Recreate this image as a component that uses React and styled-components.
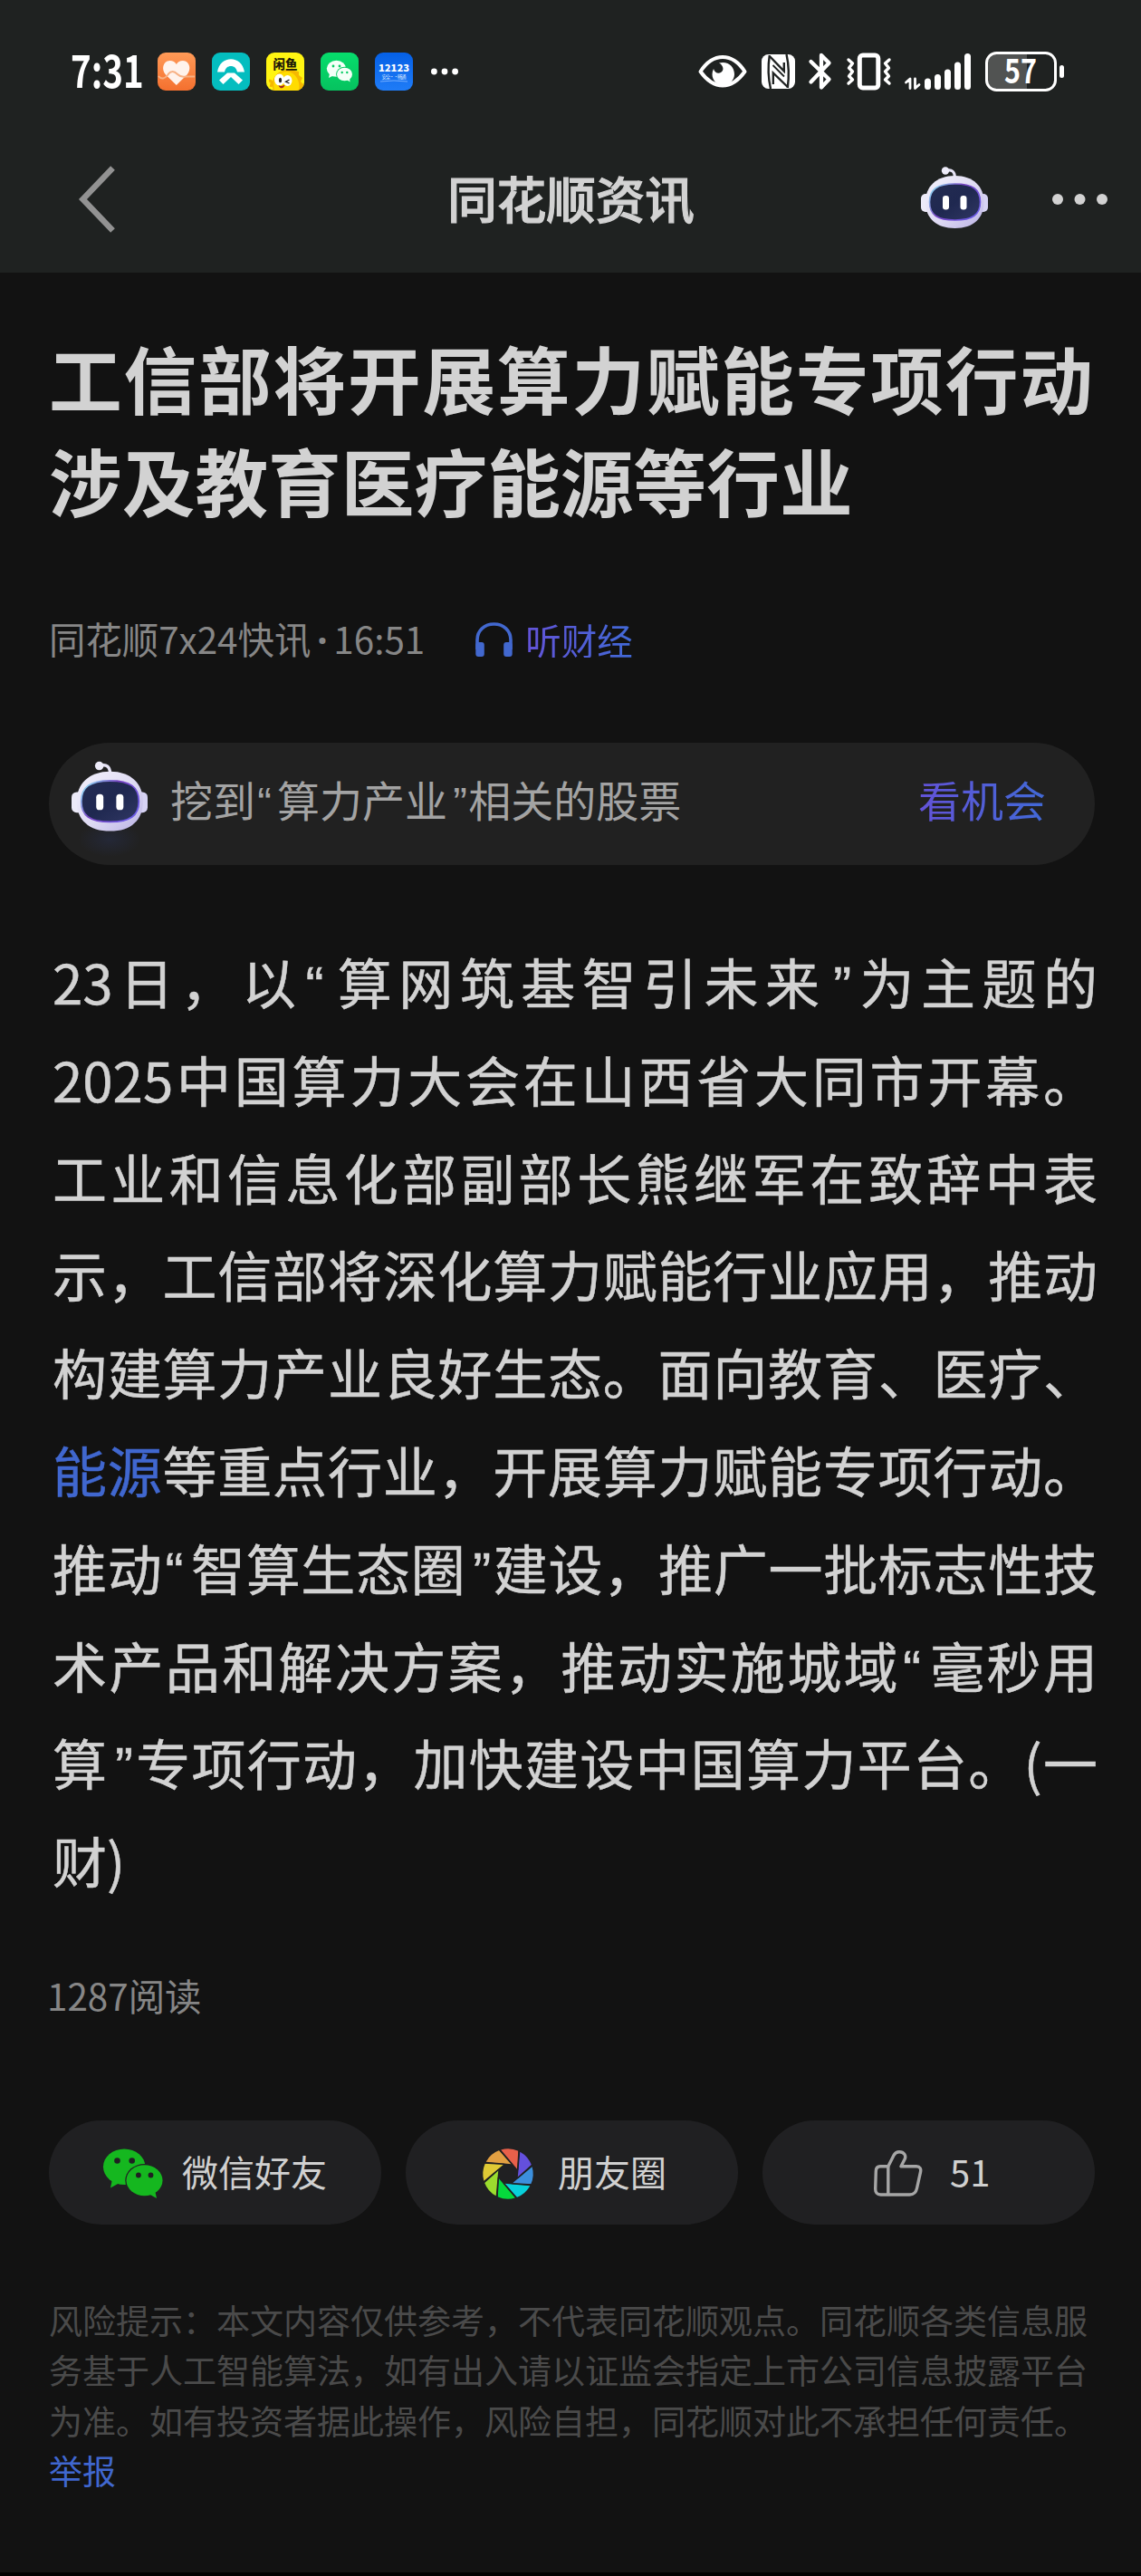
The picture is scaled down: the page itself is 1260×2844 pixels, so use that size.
import React from 'react';
import styled, { createGlobalStyle } from 'styled-components';

const GlobalStyle = createGlobalStyle`
  * {
    box-sizing: border-box;
  }

  body {
    margin: 0;
    background: #121212;
    font-family: 'Noto Sans CJK SC', sans-serif;
    text-spacing-trim: space-all;
  }

  svg {
    display: block;
    flex: none;
    overflow: visible;
  }
`;

const Page = styled.div`
  width: 1260px;
  height: 2844px;
  display: flex;
  flex-direction: column;
  background: #121212;
  border-bottom: 4px solid #000;
  overflow: hidden;
`;

const StatusBar = styled.div`
  height: 158px;
  padding: 0 84px 0 78px;
  display: flex;
  justify-content: space-between;
  align-items: center;
  background: #1f2221;
`;

const StatusGroup = styled.div`
  display: flex;
  align-items: center;
  gap: ${props => props.gap}px;
`;

const Clock = styled.div`
  width: 78px;
  padding-bottom: 8px;
  font-size: 50px;
  line-height: 50px;
  font-weight: 700;
  color: #fff;
  white-space: nowrap;
  transform: scaleX(0.77);
  transform-origin: left center;
`;

const More = styled.div`
  margin-left: 2px;
`;

const NavBar = styled.header`
  height: 143px;
  padding: 0 37px 0 87px;
  display: grid;
  grid-template-columns: 206px 1fr 206px;
  align-items: center;
  background: #1f2221;
`;

const NavTitle = styled.div`
  text-align: center;
  font-size: 54.5px;
  line-height: 60px;
  font-weight: 500;
  color: #d2d2d2;
  -webkit-text-stroke: 1.2px #d2d2d2;
  margin-left: -49px;
  padding-bottom: 23px;
`;

const NavLeft = styled.div`
  padding-bottom: 20px;
`;

const NavActions = styled.div`
  display: flex;
  align-items: center;
  justify-content: flex-end;
  gap: 71px;
  padding-bottom: 24px;
`;

const NavMore = styled.div`
  padding-top: 4px;
`;

const Article = styled.main`
  padding: 59px 51px 0 54px;
`;

const Title = styled.h1`
  margin: 0;
  width: 1153px;
  font-size: 80.7px;
  line-height: 112.5px;
  font-weight: 700;
  color: #d2d2d2;
`;

const TitleLine = styled.div`
  white-space: nowrap;
  text-align-last: ${props => (props.$fill ? 'justify' : 'left')};
`;

const Meta = styled.div`
  margin-top: 101px;
  height: 40px;
  display: flex;
  align-items: center;
  font-size: 40.4px;
  line-height: 40px;
  color: #868686;
`;

const MetaDot = styled.span`
  display: inline-block;
  width: 25px;
  text-align: center;
  font-family: 'Noto Sans', sans-serif;
  font-weight: 700;
`;

const Listen = styled.a`
  display: flex;
  align-items: center;
  gap: 14px;
  margin-left: 56px;
  font-size: 39.5px;
`;

const GradientText = styled.span`
  background: linear-gradient(90deg, #6353d8, #4169d6);
  background-clip: text;
  color: transparent;
`;

const StockBar = styled.div`
  margin-top: 94px;
  height: 135px;
  padding: 0 54px 0 25px;
  display: flex;
  align-items: center;
  border-radius: 68px;
  background: #212121;
  font-size: 47px;
  line-height: 60px;
  color: #a3a3a3;
`;

const StockText = styled.span`
  flex: 1;
  margin-left: 25px;
  padding-bottom: 12px;
`;

const StockLink = styled(GradientText)`
  padding-bottom: 12px;
`;

const Mascot = styled.div`
  padding-bottom: 17px;
`;

const Body = styled.section`
  margin: 74px 0 0 4px;
  width: 1154px;
  font-size: 60px;
  line-height: 107.8px;
  color: #d2d2d2;
  -webkit-text-stroke: 0.5px;
`;

const BodyLine = styled.div`
  height: 107.8px;
  white-space: nowrap;
  text-align-last: ${props => (props.$last ? 'left' : 'justify')};
`;

const Quote = styled.span`
  font-family: 'Liberation Sans', sans-serif;
  line-height: 0;
  margin-left: ${props => (props.$close ? '0.13em' : '0.05em')};
  margin-right: ${props => (props.$close ? '0.03em' : '0.13em')};
`;

const Keyword = styled.a`
  color: #4067cf;
`;

const Reads = styled.div`
  margin: 76px 0 0 -2px;
  font-size: 40.4px;
  line-height: 40px;
  color: #868686;
`;

const ShareRow = styled.div`
  margin-top: 118px;
  display: grid;
  grid-template-columns: repeat(3, 1fr);
  gap: 27px;
`;

const ShareButton = styled.div`
  height: 115px;
  padding: 3px 0 0 ${props => props.$inset}px;
  display: flex;
  align-items: center;
  gap: ${props => props.$gap}px;
  border-radius: 58px;
  background: #202022;
  font-size: 40px;
  line-height: 44px;
  color: #d0d0d0;
`;

const ShareLabel = styled.span`
  padding-bottom: 6px;
`;

const Notice = styled.p`
  margin: 78px 0 0;
  font-size: 37px;
  line-height: 55.4px;
  color: #4a4a4a;
  white-space: nowrap;
`;

const Report = styled.a`
  color: #4067cf;
`;

const Robot = ({ id, width, height, glow }) => (
  <svg width={width} height={height} viewBox="0 0 74 68">
    <defs>
      <linearGradient id={`${id}-shell`} x1="0" y1="0" x2="1" y2="1">
        <stop offset="0" stopColor="#f4f2fc" />
        <stop offset="0.55" stopColor="#dedaf3" />
        <stop offset="1" stopColor="#b9b1e4" />
      </linearGradient>
      <linearGradient id={`${id}-rim`} x1="0" y1="0.2" x2="1" y2="0.8">
        <stop offset="0" stopColor="#8fd8f4" />
        <stop offset="0.4" stopColor="#7a45c4" />
        <stop offset="1" stopColor="#6a5ce8" />
      </linearGradient>
      <linearGradient id={`${id}-face`} x1="0" y1="0" x2="1" y2="1">
        <stop offset="0" stopColor="#242c52" />
        <stop offset="0.5" stopColor="#1f2850" />
        <stop offset="1" stopColor="#303763" />
      </linearGradient>
      <radialGradient id={`${id}-glow`}>
        <stop offset="0" stopColor="#2a3560" stopOpacity="0.35" />
        <stop offset="1" stopColor="#2a3560" stopOpacity="0" />
      </radialGradient>
    </defs>
    {glow ? <ellipse cx="37" cy="76" rx="30" ry="17" fill={`url(#${id}-glow)`} /> : null}
    <path d="M28 4.5C34 2.5 37.5 5.5 37.5 12" fill="none" stroke="#e6e3f6" strokeWidth="3" />
    <circle cx="27" cy="4.5" r="4.2" fill="#eeecfa" />
    <rect x="0" y="30" width="12" height="20" rx="5" fill="#eceaf8" />
    <rect x="62" y="30" width="12" height="20" rx="5" fill="#d6d2f4" />
    <path
      d="M37.5 10C58 10 69.5 22 69.5 39C69.5 57 58 68 37.5 68C17 68 5 57 5 39C5 22 17 10 37.5 10Z"
      fill={`url(#${id}-shell)`}
    />
    <path
      d="M37.5 19C57 19 65.5 25 65.5 39C65.5 53 57 59 37.5 59C18 59 9.5 53 9.5 39C9.5 25 18 19 37.5 19Z"
      fill={`url(#${id}-face)`}
      stroke={`url(#${id}-rim)`}
      strokeWidth="1.6"
    />
    <rect x="24" y="32" width="7" height="15.5" rx="3.2" fill="#fff" />
    <rect x="43.5" y="32" width="7" height="15.5" rx="3.2" fill="#fff" />
  </svg>
);

const Dots = ({ width, height, r, color }) => (
  <svg width={width} height={height} viewBox={`0 0 ${width} ${height}`} fill={color}>
    <circle cx={r} cy={height / 2} r={r} />
    <circle cx={width / 2} cy={height / 2} r={r} />
    <circle cx={width - r} cy={height / 2} r={r} />
  </svg>
);

const HealthIcon = () => (
  <svg width="42" height="42" viewBox="0 0 42 42">
    <defs>
      <linearGradient id="health" x1="0" y1="0" x2="0" y2="1">
        <stop offset="0" stopColor="#ff9a57" />
        <stop offset="1" stopColor="#f4702f" />
      </linearGradient>
    </defs>
    <rect width="42" height="42" rx="9" fill="url(#health)" />
    <path d="M20.8 36L9 24.5C4 19 5.5 9.5 13.5 9C17 9 19.3 10.6 20.8 13C22.3 10.6 24.6 9 28 9C36 9.5 37.5 19 32.5 24.5Z" fill="#fff3ec" />
    <path d="M1 26C4 30 8 29 11 25C14 20 18 20 22 24C25 27 28 27 31 26.5H41" fill="none" stroke="#f7b184" strokeWidth="2" />
  </svg>
);

const CarIcon = () => (
  <svg width="42" height="42" viewBox="0 0 42 42">
    <rect width="42" height="42" rx="9" fill="#04bdbf" />
    <path d="M6 21.5C7.5 12 14 7.2 21 7.2S34.5 12 36 21.5H28C27 17 24.5 15 21 15S15 17 14 21.5Z" fill="#fff" />
    <path d="M17 22.5H25L34 30.5L29.5 35L21 27L12.5 35L8 30.5Z" fill="#fff" />
  </svg>
);

const FishIcon = () => (
  <svg width="42" height="42" viewBox="0 0 42 42">
    <defs>
      <clipPath id="fish">
        <rect width="42" height="42" rx="9" />
      </clipPath>
    </defs>
    <g clipPath="url(#fish)">
      <rect width="42" height="42" fill="#fff512" />
      <path d="M8 42C4 30 11 20 24 19L29 17L31 20L36 21L36 25L40 28L38 32L42 36V42Z" fill="#f6b800" />
      <path d="M9 42C6 30 12 21 23 21C33 22 38 32 36 42Z" fill="#ffdc00" />
      <ellipse cx="14.5" cy="30" rx="5.5" ry="6.5" fill="#fff" />
      <ellipse cx="23.5" cy="31" rx="5" ry="6" fill="#fff" />
      <ellipse cx="15.5" cy="30.5" rx="1.6" ry="2.8" fill="#222" />
      <path d="M25.5 30L21.5 32.2L25.5 34" fill="none" stroke="#222" strokeWidth="1.3" />
      <path d="M13.5 36C16 37.5 18 37 20.5 35.5C20 40 15 41 13.5 36Z" fill="#a3271d" />
      <path d="M3 31C6 31 7 33 5 38" fill="none" stroke="#f6b800" strokeWidth="3" />
    </g>
    <text x="21" y="17.5" textAnchor="middle" fontSize="13.5" fontWeight="900" fill="#1d1a08">闲鱼</text>
  </svg>
);

const WechatAppIcon = () => (
  <svg width="42" height="42" viewBox="0 0 42 42">
    <defs>
      <linearGradient id="wx" x1="0" y1="0" x2="0" y2="1">
        <stop offset="0" stopColor="#06dd6c" />
        <stop offset="1" stopColor="#06c25f" />
      </linearGradient>
    </defs>
    <rect width="42" height="42" rx="9" fill="url(#wx)" />
    <path d="M10 23L9 28L14 25.5Z" fill="#f4fff8" />
    <ellipse cx="17.5" cy="17.8" rx="10.7" ry="9" fill="#f4fff8" />
    <ellipse cx="26.5" cy="24" rx="9.4" ry="8.2" fill="#06cc63" />
    <path d="M29 30L32.5 32.5L32 28Z" fill="#f4fff8" />
    <ellipse cx="26.5" cy="24" rx="8.5" ry="7.3" fill="#f4fff8" />
    <g fill="#06cc63">
      <circle cx="14" cy="15" r="1.4" />
      <circle cx="21" cy="15" r="1.4" />
      <circle cx="23.7" cy="22" r="1.2" />
      <circle cx="29.3" cy="22" r="1.2" />
    </g>
  </svg>
);

const TrafficIcon = () => (
  <svg width="42" height="42" viewBox="0 0 42 42">
    <defs>
      <linearGradient id="traffic" x1="0" y1="0" x2="0" y2="1">
        <stop offset="0" stopColor="#0560e6" />
        <stop offset="1" stopColor="#1f7cf7" />
      </linearGradient>
    </defs>
    <rect width="42" height="42" rx="9" fill="url(#traffic)" />
    <text x="21" y="21" textAnchor="middle" textLength="34" lengthAdjust="spacingAndGlyphs" fontSize="10.5" fontWeight="900" fill="#fff">12123</text>
    <text x="21" y="28.5" textAnchor="middle" textLength="27" fontSize="5.5" fill="#d6e6ff">安全··畅通</text>
    <path d="M6 32Q21 30 36 32" fill="none" stroke="#8dbcff" strokeWidth="0.8" />
  </svg>
);

const EyeIcon = () => (
  <svg width="54" height="38" viewBox="0 0 54 38">
    <path d="M2.5 19C9 9 17 3 27 3S45 9 51.5 19C45 28 37 34.5 27 34.5S9 28 2.5 19Z" fill="none" stroke="#fff" strokeWidth="4" strokeLinejoin="round" />
    <path d="M23 9.5C33 7 40 13.5 40 22C40 29 34 34 27.5 34C21 34 15.5 29 15.5 22C15.5 20 16 18 17 16C18 20 22 22 25 20C29 18 28 12 23 9.5Z" fill="#fff" />
  </svg>
);

const NfcIcon = () => (
  <svg width="37" height="38" viewBox="0 0 37 38">
    <rect width="37" height="38" rx="7.5" fill="#fff" />
    <g fill="none" stroke="#1f2221" strokeWidth="2.4">
      <path d="M8.8 1C7 13 7.5 27 10 38" />
      <path d="M27.5 0C30 11 30.5 24 28.8 37" />
      <path d="M8.8 2L24.8 18.5V9" />
      <path d="M28.8 36L12.8 20.5V33" />
      <path d="M12.5 12L25 24.5" strokeWidth="1.8" />
    </g>
  </svg>
);

const BluetoothIcon = () => (
  <svg width="26" height="42" viewBox="0 0 26 42">
    <path d="M2.5 10L22.5 29.5L14 38.5V3L22.5 11.5L2.5 32.5" fill="none" stroke="#fff" strokeWidth="4.3" strokeLinejoin="round" strokeLinecap="round" />
  </svg>
);

const VibrateIcon = () => (
  <svg width="49" height="42" viewBox="0 0 49 42" fill="none" stroke="#fff" strokeLinejoin="round" strokeLinecap="round">
    <rect x="14.3" y="3" width="20.5" height="36" rx="3.5" strokeWidth="5" />
    <path d="M2 8L6.5 12L2.5 17L6.5 21L2.5 26L6.5 30L2 34" strokeWidth="3.4" />
    <path d="M47 8L42.5 12L46.5 17L42.5 21L46.5 26L42.5 30L47 34" strokeWidth="3.4" />
  </svg>
);

const SignalIcon = () => (
  <svg width="73" height="42" viewBox="0 0 73 42">
    <g stroke="#fff" strokeWidth="7" strokeLinecap="round">
      <path d="M25.5 32V37.5M36.5 27.5V37.5M47.5 22V37.5M58.5 14V37.5M69.5 4.5V37.5" />
    </g>
    <path d="M1.5 33L6 29V39.5M11.5 29V39.5L16 35.5" fill="none" stroke="#fff" strokeWidth="2.8" strokeLinecap="round" strokeLinejoin="round" />
  </svg>
);

const BatteryIcon = () => (
  <svg width="88" height="44" viewBox="0 0 88 44">
    <path d="M46 2H13A11 11 0 0 0 2 13V31A11 11 0 0 0 13 42H46Z" fill="#515352" />
    <rect x="1.5" y="1.5" width="76" height="41" rx="11" fill="none" stroke="#fff" strokeWidth="3" />
    <rect x="82" y="15" width="5" height="14" rx="2.5" fill="#fff" />
    <text x="39" y="35" textAnchor="middle" textLength="36" lengthAdjust="spacingAndGlyphs" fontSize="37" fontWeight="700" fill="#fff">57</text>
  </svg>
);

const BackIcon = () => (
  <svg width="42" height="74" viewBox="0 0 42 74">
    <path d="M37.5 2.5L4.5 37L37.5 71.5" fill="none" stroke="#929292" strokeWidth="6.5" />
  </svg>
);

const HeadphoneIcon = () => (
  <svg width="41" height="38" viewBox="0 0 41 38">
    <path d="M2 30V19.5C2 9 10 2 20.5 2S39 9 39 19.5V30" fill="none" stroke="#4268cf" strokeWidth="3.6" />
    <rect x="0.3" y="22" width="9.5" height="16" rx="3" fill="#4268cf" />
    <rect x="31.2" y="22" width="9.5" height="16" rx="3" fill="#4268cf" />
  </svg>
);

const WechatIcon = () => (
  <svg width="66" height="56" viewBox="0 0 66 56">
    <path d="M10 34L8 43.5L18 38Z" fill="#15b71f" />
    <ellipse cx="23.2" cy="20.2" rx="23.2" ry="19.8" fill="#15b71f" />
    <ellipse cx="45.5" cy="35.2" rx="21.2" ry="18.2" fill="#202022" />
    <path d="M50 50L59 55L57 46Z" fill="#15b71f" />
    <ellipse cx="45.5" cy="35.2" rx="20" ry="17" fill="#15b71f" />
    <g fill="#202022">
      <circle cx="15.5" cy="13.5" r="3.3" />
      <circle cx="31.7" cy="13.5" r="3.3" />
      <circle cx="38.9" cy="29.5" r="2.9" />
      <circle cx="52.5" cy="29.5" r="2.9" />
    </g>
  </svg>
);

const BLADES = ['#e8604a', '#6450dd', '#3c8fdd', '#08d0da', '#06d93c', '#9bdc2e', '#dfca35', '#e2a042'];

const ApertureIcon = () => (
  <svg width="56" height="56" viewBox="-28 -28 56 56">
    {BLADES.map((color, i) => (
      <path
        key={color}
        d="M-7.8 -26.6A27.7 27.7 0 0 1 11.5 -25.2L10.5 -4.7Z"
        transform={`rotate(${i * 45})`}
        fill={color}
      />
    ))}
    {BLADES.map((color, i) => (
      <path key={color} d="M12 -26L10.6 -4" transform={`rotate(${i * 45})`} stroke="#202022" strokeWidth="1.4" />
    ))}
  </svg>
);

const ThumbIcon = () => (
  <svg width="54" height="51" viewBox="0 0 54 51" fill="none" stroke="#a6a6a6" strokeWidth="3.4" strokeLinejoin="round">
    <path d="M15.8 17.8L22 5.5C23.5 2.5 25.5 1.7 28 1.7C33.5 1.7 36 6 34 10L30 17.8H47C51 17.8 52.3 20.5 51.5 24L47.5 42C46.5 47 44 49 39.5 49H7.5C3.5 49 1.6 46.5 1.7 42.5L2.3 23C2.4 19.5 4 17.8 7 17.8Z" />
    <path d="M15.8 17.8V49" />
  </svg>
);

const App = () => (
  <Page>
    <GlobalStyle />
    <StatusBar>
      <StatusGroup gap={18}>
        <Clock>7:31</Clock>
        <HealthIcon />
        <CarIcon />
        <FishIcon />
        <WechatAppIcon />
        <TrafficIcon />
        <More>
          <Dots width={30} height={8} r={3.4} color="#fff" />
        </More>
      </StatusGroup>
      <StatusGroup gap={15.6}>
        <EyeIcon />
        <NfcIcon />
        <BluetoothIcon />
        <VibrateIcon />
        <SignalIcon />
        <BatteryIcon />
      </StatusGroup>
    </StatusBar>
    <NavBar>
      <NavLeft>
        <BackIcon />
      </NavLeft>
      <NavTitle>同花顺资讯</NavTitle>
      <NavActions>
        <Robot id="nav" width={74} height={68} />
        <NavMore>
          <Dots width={61} height={12} r={6} color="#d2d2d2" />
        </NavMore>
      </NavActions>
    </NavBar>
    <Article>
      <Title>
        <TitleLine $fill>工信部将开展算力赋能专项行动</TitleLine>
        <TitleLine>涉及教育医疗能源等行业</TitleLine>
      </Title>
      <Meta>
        <span>同花顺7x24快讯<MetaDot>·</MetaDot>16:51</span>
        <Listen>
          <HeadphoneIcon />
          <GradientText>听财经</GradientText>
        </Listen>
      </Meta>
      <StockBar>
        <Mascot>
          <Robot id="bar" width={84} height={78} glow />
        </Mascot>
        <StockText>挖到<Quote>“</Quote>算力产业<Quote $close>”</Quote>相关的股票</StockText>
        <StockLink>看机会</StockLink>
      </StockBar>
      <Body>
        <BodyLine>23日，以<Quote>“</Quote>算网筑基智引未来<Quote $close>”</Quote>为主题的</BodyLine>
        <BodyLine>2025中国算力大会在山西省大同市开幕。</BodyLine>
        <BodyLine>工业和信息化部副部长熊继军在致辞中表</BodyLine>
        <BodyLine>示，工信部将深化算力赋能行业应用，推动</BodyLine>
        <BodyLine>构建算力产业良好生态。面向教育、医疗、</BodyLine>
        <BodyLine><Keyword>能源</Keyword>等重点行业，开展算力赋能专项行动。</BodyLine>
        <BodyLine>推动<Quote>“</Quote>智算生态圈<Quote $close>”</Quote>建设，推广一批标志性技</BodyLine>
        <BodyLine>术产品和解决方案，推动实施城域<Quote>“</Quote>毫秒用</BodyLine>
        <BodyLine>算<Quote $close>”</Quote>专项行动，加快建设中国算力平台。(一</BodyLine>
        <BodyLine $last>财)</BodyLine>
      </Body>
      <Reads>1287阅读</Reads>
      <ShareRow>
        <ShareButton $inset={60} $gap={21}>
          <WechatIcon />
          <ShareLabel>微信好友</ShareLabel>
        </ShareButton>
        <ShareButton $inset={85} $gap={27}>
          <ApertureIcon />
          <ShareLabel>朋友圈</ShareLabel>
        </ShareButton>
        <ShareButton $inset={123} $gap={30}>
          <ThumbIcon />
          <ShareLabel>51</ShareLabel>
        </ShareButton>
      </ShareRow>
      <Notice>
        风险提示：本文内容仅供参考，不代表同花顺观点。同花顺各类信息服<br />
        务基于人工智能算法，如有出入请以证监会指定上市公司信息披露平台<br />
        为准。如有投资者据此操作，风险自担，同花顺对此不承担任何责任。<br />
        <Report>举报</Report>
      </Notice>
    </Article>
  </Page>
);

export default App;
